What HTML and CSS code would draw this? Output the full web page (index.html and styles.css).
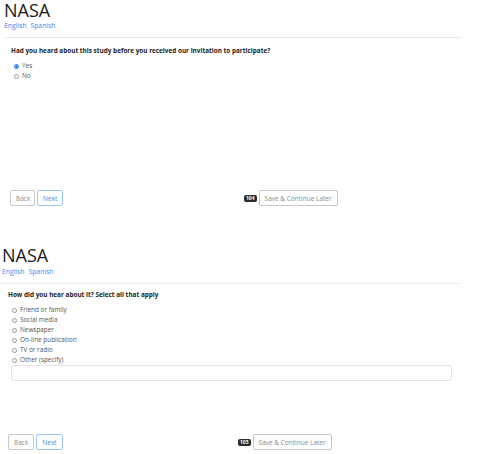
FILE: index.html
```html
<!DOCTYPE html>
<html lang="en">
<head>
    <meta charset="UTF-8">
    <meta name="viewport" content="width=device-width, initial-scale=1.0">
    <title>NASA - Survey</title>
    <link rel="stylesheet" href="styles.css">
</head>
<body>
    <section class="survey survey-one">
        <header class="survey-header">
            <h1 class="brand">NASA</h1>
            <nav class="langs">
                <a href="#">English</a>
                <a href="#">Spanish</a>
            </nav>
        </header>

        <div class="question">
            <p class="prompt">Had you heard about this study before you received our invitation to participate?</p>
            <label class="option"><span class="radio checked"></span>Yes</label>
            <label class="option"><span class="radio"></span>No</label>
        </div>

        <footer class="survey-nav">
            <div class="nav-left">
                <button class="btn">Back</button>
                <button class="btn btn-next">Next</button>
            </div>
            <div class="nav-right">
                <span class="badge">104</span>
                <button class="btn">Save &amp; Continue Later</button>
            </div>
        </footer>
    </section>

    <section class="survey survey-two">
        <header class="survey-header">
            <h1 class="brand">NASA</h1>
            <nav class="langs">
                <a href="#">English</a>
                <a href="#">Spanish</a>
            </nav>
        </header>

        <div class="question">
            <p class="prompt">How did you hear about it? Select all that apply</p>
            <label class="option"><span class="radio"></span>Friend or family</label>
            <label class="option"><span class="radio"></span>Social media</label>
            <label class="option"><span class="radio"></span>Newspaper</label>
            <label class="option"><span class="radio"></span>On-line publication</label>
            <label class="option"><span class="radio"></span>TV or radio</label>
            <label class="option"><span class="radio"></span>Other (specify)</label>
            <input type="text" class="other-input">
        </div>

        <footer class="survey-nav">
            <div class="nav-left">
                <button class="btn">Back</button>
                <button class="btn btn-next">Next</button>
            </div>
            <div class="nav-right">
                <span class="badge">105</span>
                <button class="btn">Save &amp; Continue Later</button>
            </div>
        </footer>
    </section>
</body>
</html>
```

FILE: styles.css
```css
* {
    margin: 0;
    padding: 0;
    box-sizing: border-box;
}

body {
    font-family: 'Open Sans', 'Noto Sans', sans-serif;
    background: #fff;
    color: #222;
    width: 482px;
    height: 454px;
    overflow: hidden;
}

.survey-header {
    border-bottom: 1px solid #ececec;
}

.brand {
    font-size: 18px;
    line-height: 20px;
    font-weight: 500;
    color: #1a1a1a;
}

.langs {
    display: flex;
    gap: 4px;
    font-size: 6.8px;
    line-height: 10px;
}

.langs a {
    color: #3b8ef0;
    text-decoration: none;
}

.prompt {
    font-size: 6.4px;
    font-weight: 700;
    color: #222;
    line-height: 10px;
}

.option {
    display: flex;
    align-items: center;
    gap: 3px;
    font-size: 6.4px;
    line-height: 10px;
    color: #555;
}

.radio {
    width: 5px;
    height: 5px;
    border: 1px solid #999;
    border-radius: 50%;
    background: #fff;
}

.radio.checked {
    border-color: #1a73e8;
    background: radial-gradient(circle, #1a73e8 45%, #fff 55%);
}

.other-input {
    display: block;
    height: 16px;
    border: 1px solid #e3e3e3;
    border-radius: 3px;
    background: #fff;
}

.survey-nav {
    display: grid;
    align-items: center;
}

.nav-left {
    display: flex;
    gap: 2px;
}

.nav-right {
    display: flex;
    align-items: center;
    gap: 2px;
}

.btn {
    font-family: inherit;
    font-size: 6.5px;
    height: 16px;
    padding: 0 5px;
    background: #fff;
    color: #8a8a8a;
    border: 1px solid #c8c8c8;
    border-radius: 2px;
}

.btn-next {
    color: #3b8ef0;
    border-color: #9cc4f7;
}

.badge {
    background: #2b2b2b;
    color: #fff;
    font-size: 5px;
    font-weight: 700;
    line-height: 7px;
    padding: 0 2px;
    border-radius: 2px;
}

/* first screen */
.survey-one {
    margin-left: 4px;
    width: 458px;
}

.survey-one .langs {
    margin-top: 1px;
    padding-bottom: 6px;
}

.survey-one .question {
    padding: 8px 0 0 7px;
    height: 152px;
}

.survey-one .prompt {
    margin-bottom: 5px;
}

.survey-one .option {
    padding-left: 3px;
}

.survey-one .survey-nav {
    grid-template-columns: 234px auto;
    padding-left: 6px;
}

.survey-one .btn:first-child {
    width: 25px;
}

/* second screen */
.survey-two {
    margin-top: 39px;
    width: 461px;
}

.survey-two .brand {
    padding-left: 2px;
}

.survey-two .langs {
    margin-top: 2px;
    padding-left: 2px;
    padding-bottom: 6px;
}

.survey-two .question {
    padding: 6px 0 0 8px;
    height: 150px;
}

.survey-two .prompt {
    margin-bottom: 5px;
}

.survey-two .option {
    padding-left: 4px;
}

.survey-two .other-input {
    margin: 0 0 0 3px;
    width: 441px;
}

.survey-two .survey-nav {
    grid-template-columns: 230px auto;
    padding-left: 8px;
}
```
